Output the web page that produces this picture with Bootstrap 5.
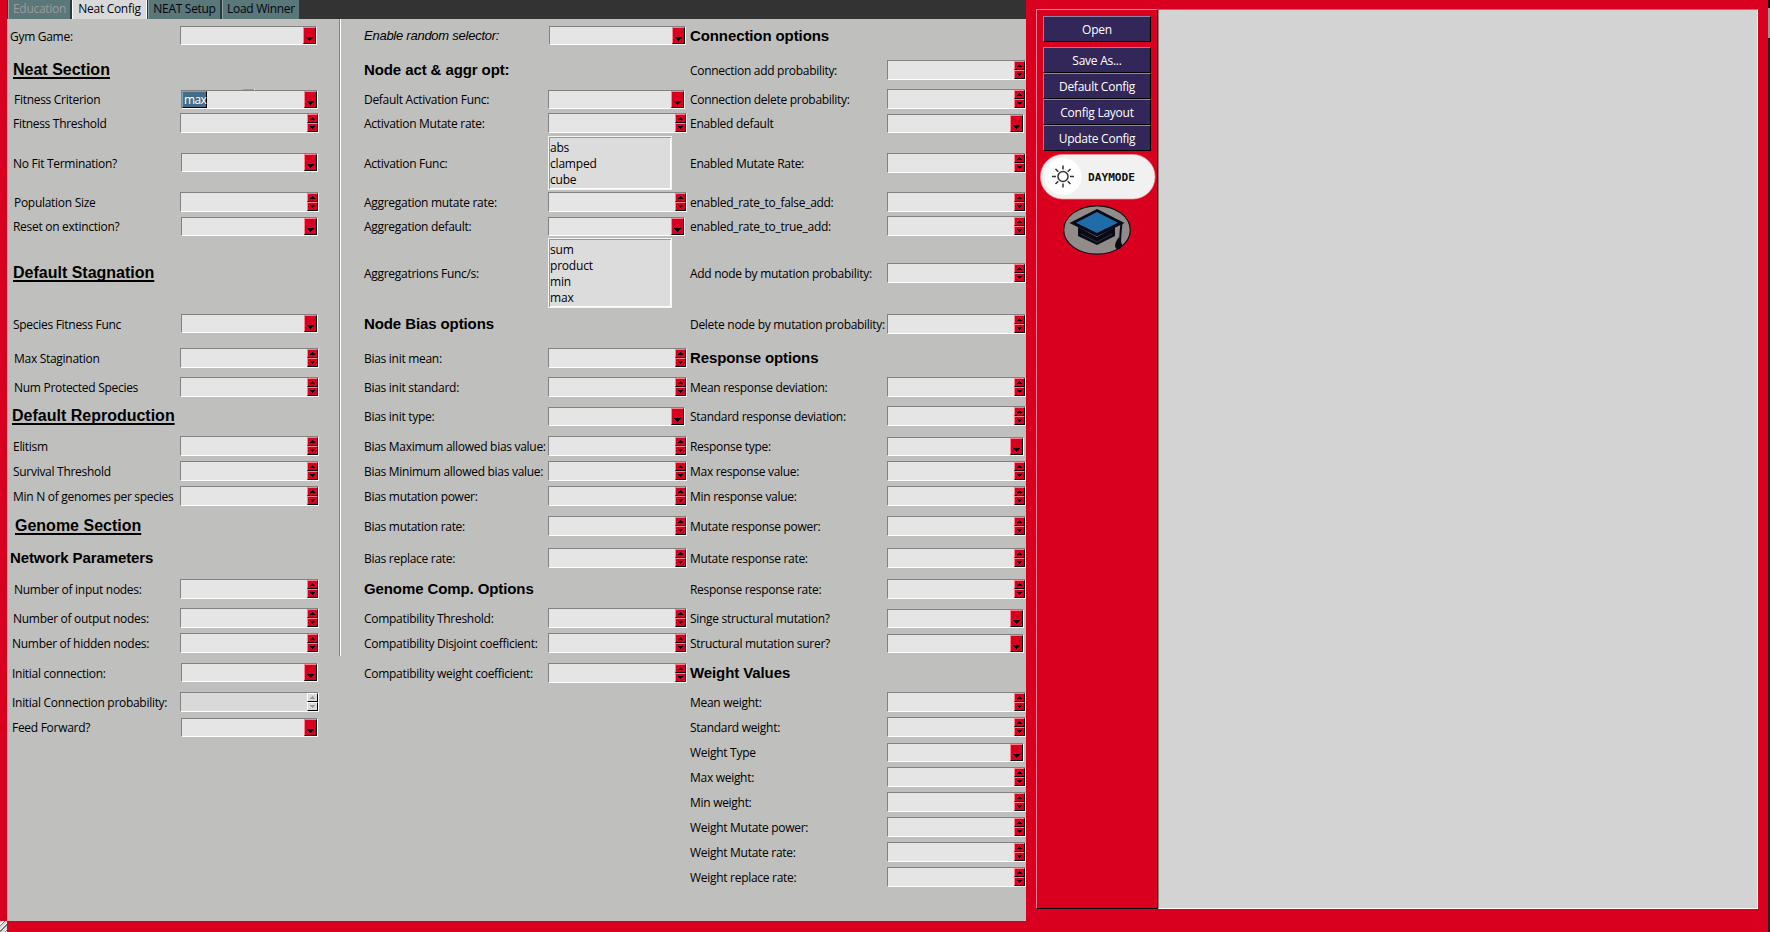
<!DOCTYPE html>
<html lang="en">
<head>
<meta charset="utf-8">
<title>NEAT configuration</title>
<link rel="stylesheet" href="https://cdn.jsdelivr.net/npm/bootstrap@5.3.0/dist/css/bootstrap.min.css">
<style>
:root{--red:#d9001f}
body{width:1770px;height:932px;overflow:hidden;background:var(--red);color:#000;font:12px/16px "Open Sans","Noto Sans",sans-serif;letter-spacing:-.29px}
.edge{width:7px}
.grip{width:7px;height:11px;background:repeating-linear-gradient(135deg,#d9d9d9 0 2px,#fff 2px 3px,#777 3px 4px)}
.book{width:1019px;height:921px;background:#bfbfbd}
.tabs{height:19px;background:#333;padding-left:1px}
.tabs button{border:0;border-left:1px solid #8ba2a4;border-right:1px solid #2b3a3b;background:#5a777a;color:#050510;height:19px;padding:0 0 2px;line-height:15px;letter-spacing:-.3px;margin-right:1px;flex:none}
.tabs button.active{background:#d9d9d9;border-color:#fff}
.tabs button:disabled{color:#9b9b9b}
.form-area{display:grid;height:902px;padding-top:5px;position:relative;
 grid-template-columns:173px 184px 184px 142px 197px 139px;
 grid-template-rows:34px 29px 24px 26px 53px 24px 25px 73px 34px 29px 29px 30px 25px 25px 30px 32px 31px 29px 25px 30px 29px 25px repeat(6,25px) 24px;justify-content:start}
.cell{height:24px;white-space:nowrap;min-width:0}
label.cell{padding-top:2px}
label.cell:has(.hd),label.cell:has(.ital){padding-top:0}
.h52{height:52px}.h68{height:68px}
.hd{font:bold 15px/18px "Liberation Sans",sans-serif;letter-spacing:-.1px}
.hd.big{font-size:16px;letter-spacing:0;text-decoration:underline;text-decoration-thickness:2px;text-underline-offset:2px;text-decoration-skip-ink:none}
.ital{font:italic 13px/16px "Liberation Sans",sans-serif;letter-spacing:-.25px}
.entry{border:1px solid;border-color:#828282 #fff #fff #828282;background:#e5e5e5;flex:none}
.spin{width:139px;height:20px}
.combo{width:137px;height:19px}
.low{margin-top:1px}.high{margin-bottom:1px}
.shift{margin-left:1px}
.off{background:#d9d9d9}
.arrow{background:var(--red);border:1px solid;border-color:#ff7f8f #000 #000 #ff7f8f;display:block}
.off .arrow{background:#d9d9d9;border-color:#fff #000 #000 #fff}
.spin .arrow{width:11px;height:9px}
.combo .arrow{width:13px;height:17px}
.arrow svg{display:block}
.pick{background:#436e8a;color:#fff;border:1px solid;border-color:#7fa3b8 #000 #000 #7fa3b8;height:17px;line-height:16px;width:25px;padding-left:1px;letter-spacing:-.6px}
.options{width:124px;border:1px solid #f4f4f4;background:#dcdcdc;box-shadow:inset 1px 1px #999,inset -1px -1px #fff;padding:2px 1px;letter-spacing:-.2px;flex:none}
.options div{height:16px;line-height:17px}
.divider{position:absolute;left:332px;top:0;width:2px;height:637px;background:linear-gradient(90deg,#828282 50%,#fff 50%)}
.notch{position:absolute;left:236px;top:70px;width:12px;height:1px;background:#999;border-right:1px solid #fff}
.side{width:122px;height:900px;margin:9px 0 0 10px;border:1px solid;border-color:#ff7f8f #200 #000 #ff7f8f;padding:6px}
.side .act{width:108px;height:26px;flex:none;background:#33275a;color:#fff;border:1px solid;border-color:#8c86a0 #000 #000 #8c86a0;padding:0;line-height:23px;letter-spacing:-.25px}
.toggle{margin:3px 0 0 1px}
.paper{width:600px;height:900px;margin-top:9px;background:#d3d3d3;border:1px solid;border-color:#828282 #fff #fff #828282}
.strip{width:2px;background:linear-gradient(#111 8px,#999 8px 38px,#222 38px)}
</style>
<script src="https://cdn.jsdelivr.net/npm/bootstrap@5.3.0/dist/js/bootstrap.bundle.min.js"></script>
</head>
<body class="d-flex">
<div class="edge d-flex flex-column justify-content-end flex-shrink-0"><div class="grip"></div></div>
<main class="book flex-shrink-0">
 <nav class="tabs d-flex">
  <button disabled style="width:63px">Education</button>
  <button class="active" style="width:75px">Neat Config</button>
  <button style="width:73px">NEAT Setup</button>
  <button style="width:78px">Load Winner</button>
 </nav>
 <form class="form-area" id="form"><i class="divider"></i><i class="notch"></i></form>
</main>
<aside class="side d-flex flex-column align-items-center flex-shrink-0">
 <button class="act" style="margin-bottom:5px">Open</button>
 <button class="act">Save As...</button>
 <button class="act">Default Config</button>
 <button class="act">Config Layout</button>
 <button class="act">Update Config</button>
 <svg width="116" height="46" viewBox="0 0 116 46" class="toggle flex-shrink-0">
  <rect x=".5" y=".5" width="114.500" height="44.500" rx="22" fill="#f1f1f1" stroke="#f5a3a0" stroke-width=".7"/>
  <circle cx="23" cy="22.500" r="18.500" fill="#fff"/>
  <g fill="none" stroke="#333" stroke-width="1.500"><circle cx="23" cy="22.500" r="5"/><path d="M23 11.500v4M23 29.500v4M12 22.500h4M30 22.500h4M15.500 15l2.800 2.800M27.700 27.200l2.800 2.800M30.500 15l-2.800 2.800M18.300 27.200l-2.800 2.800"/></g>
  <text x="48" y="26.500" font-family="DejaVu Sans Mono,monospace" font-weight="bold" font-size="10.500" textLength="47" lengthAdjust="spacingAndGlyphs" letter-spacing="0" fill="#111">DAYMODE</text>
 </svg>
 <svg width="68" height="50" viewBox="0 0 68 50" style="margin-top:5px" class="flex-shrink-0">
  <ellipse cx="34" cy="25" rx="33.300" ry="24.200" fill="#918b89" stroke="#111" stroke-width="1.200"/>
  <path d="M15 22v9l19 9 18-9v-9L34 32z" fill="#080b16"/>
  <path d="M18 29l16 8 15-8" fill="none" stroke="#3c3944" stroke-width=".8"/>
  <path d="M34 4L6.500 18 34 31.500 61.500 18z" fill="#080b16"/>
  <path d="M34 7L13 17.700l21 10.200 21-10.200z" fill="#206ca8"/>
  <path d="M58.500 19q-1 7-1.500 18" fill="none" stroke="#080b16" stroke-width="2"/>
  <path d="M56 32q-4 5-4 9 1 4 4 3 3-1 3-4-1-5-3-8z" fill="#080b16"/>
 </svg>
</aside>
<section class="paper flex-shrink-0"></section>
<div class="strip ms-auto flex-shrink-0"></div>
<script>
// Each row: [label, indent, kind] for the three columns. Kinds: s spinbox, c combobox, l listbox; b/u/i are heading styles.
const rows = [
 [["Gym Game:",2,"c high"],["Enable random selector:",0,"c high","i"],["Connection options",0,"","b"]],
 [["Neat Section",5,"","u"],["Node act & aggr opt:",0,"","b"],["Connection add probability:",0,"s"]],
 [["Fitness Criterion",6,"c low max"],["Default Activation Func:",0,"c low"],["Connection delete probability:",0,"s"]],
 [["Fitness Threshold",5,"s"],["Activation Mutate rate:",0,"s"],["Enabled default",0,"c low"]],
 [["No Fit Termination?",5,"c high"],["Activation Func:",0,"l abs,clamped,cube"],["Enabled Mutate Rate:",0,"s"]],
 [["Population Size",6,"s"],["Aggregation mutate rate:",0,"s"],["enabled_rate_to_false_add:",0,"s"]],
 [["Reset on extinction?",5,"c low"],["Aggregation default:",0,"c low"],["enabled_rate_to_true_add:",0,"s"]],
 [["Default Stagnation",5,"","u"],["Aggregatrions Func/s:",0,"l sum,product,min,max"],["Add node by mutation probability:",0,"s"]],
 [["Species Fitness Func",5,"c high"],["Node Bias options",0,"","b"],["Delete node by mutation probability:",0,"s"]],
 [["Max Stagination",6,"s"],["Bias init mean:",0,"s"],["Response options",0,"","b"]],
 [["Num Protected Species",6,"s"],["Bias init standard:",0,"s"],["Mean response deviation:",0,"s"]],
 [["Default Reproduction",4,"","u"],["Bias init type:",0,"c low"],["Standard response deviation:",0,"s"]],
 [["Elitism",5,"s"],["Bias Maximum allowed bias value:",0,"s"],["Response type:",0,"c low"]],
 [["Survival Threshold",5,"s"],["Bias Minimum allowed bias value:",0,"s"],["Max response value:",0,"s"]],
 [["Min N of genomes per species",5,"s"],["Bias mutation power:",0,"s"],["Min response value:",0,"s"]],
 [["Genome Section",7,"","u"],["Bias mutation rate:",0,"s"],["Mutate response power:",0,"s"]],
 [["Network Parameters",2,"","b"],["Bias replace rate:",0,"s"],["Mutate response rate:",0,"s"]],
 [["Number of input nodes:",6,"s"],["Genome Comp. Options",0,"","b"],["Response response rate:",0,"s"]],
 [["Number of output nodes:",5,"s"],["Compatibility Threshold:",0,"s"],["Singe structural mutation?",0,"c low"]],
 [["Number of hidden nodes:",4,"s"],["Compatibility Disjoint coefficient:",0,"s"],["Structural mutation surer?",0,"c low"]],
 [["Initial connection:",4,"c high"],["Compatibility weight coefficient:",0,"s"],["Weight Values",0,"","b"]],
 [["Initial Connection probability:",4,"s off"],null,["Mean weight:",0,"s"]],
 [["Feed Forward?",4,"c low"],null,["Standard weight:",0,"s"]],
 [null,null,["Weight Type",0,"c low"]],
 [null,null,["Max weight:",0,"s"]],
 [null,null,["Min weight:",0,"s"]],
 [null,null,["Weight Mutate power:",0,"s"]],
 [null,null,["Weight Mutate rate:",0,"s"]],
 [null,null,["Weight replace rate:",0,"s"]]
];
const up = c => `<svg width="9" height="7" shape-rendering="crispEdges"><path d="M4 2h1v1h1v1h1v1H2V4h1V3h1z" fill="${c}"/></svg>`;
const down = c => `<svg width="9" height="7" shape-rendering="crispEdges"><path d="M2 2h5v1H6v1H5v1H4V4H3V3H2z" fill="${c}"/></svg>`;
const big = `<svg width="11" height="15" shape-rendering="crispEdges"><path d="M2 9h7v1H8v1H7v1H6v1H5v-1H4v-1H3v-1H2z" fill="#000"/></svg>`;
function field(kind, col, row) {
  const cls = kind.split(" ").slice(1);
  if (kind[0] === "l")
    return `<div class="options">${cls[0].split(",").map(o => `<div>${o}</div>`).join("")}</div>`;
  if (kind[0] === "s") {
    const ink = cls.includes("off") ? "#999" : "#000";
    return `<div class="entry spin d-flex justify-content-end ${cls.join(" ")}"><div><span class="arrow">${up(ink)}</span><span class="arrow">${down(ink)}</span></div></div>`;
  }
  const shift = (col === 0 && row > 0) || (col === 1 && row === 0) ? " shift" : "";
  return `<div class="entry combo d-flex ${cls.join(" ")}${shift}">${cls.includes("max") ? '<span class="pick">max</span>' : ""}<span class="arrow ms-auto">${big}</span></div>`;
}
const styles = {b: "hd", u: "hd big", i: "ital"};
let html = "";
rows.forEach((r, y) => r.forEach((c, x) => {
  if (!c) return;
  const tall = y === 4 ? " h52" : y === 7 ? " h68" : "";
  const at = n => `grid-row:${y + 1};grid-column:${n}`;
  const indent = c[1] + (x === 0 ? 1 : 0);
  html += `<label class="cell d-flex align-items-center${tall}" style="${at(x * 2 + 1)};padding-left:${indent}px"><span class="${styles[c[3]] || ""}">${c[0].replace("&", "&amp;")}</span></label>`;
  if (c[2]) html += `<div class="cell d-flex align-items-center${tall}" style="${at(x * 2 + 2)}">${field(c[2], x, y)}</div>`;
}));
document.getElementById("form").insertAdjacentHTML("beforeend", html);
</script>
</body>
</html>
